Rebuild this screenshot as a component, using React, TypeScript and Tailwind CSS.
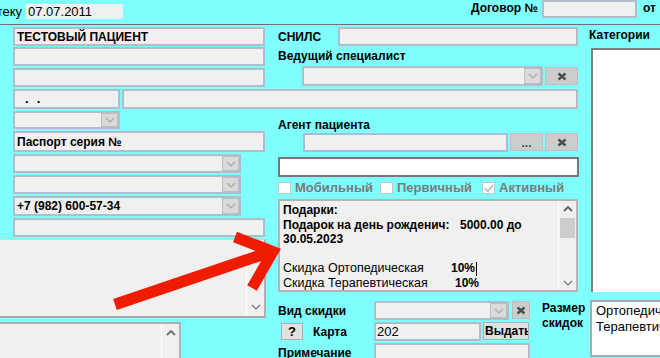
import React from "react";

const FIELD = "bg-[#F0F0F0] border-2 border-[#B3BDCA] shrink-0";

function Chevron({ color = "#A8A8A8", up = false }: { color?: string; up?: boolean }) {
  return (
    <svg width="10" height="6" viewBox="0 0 10 6">
      <polyline
        points={up ? "1,5 5,1 9,5" : "1,1 5,5 9,1"}
        fill="none"
        stroke={color}
        strokeWidth={up ? 1.8 : 1.2}
      />
    </svg>
  );
}

function XIcon() {
  return (
    <svg width="10" height="9" viewBox="0 0 10 9">
      <path d="M1.5 1.5 L8.5 7.5 M8.5 1.5 L1.5 7.5" stroke="#4d4d4d" strokeWidth="2.4" />
    </svg>
  );
}

function Combo({ className = "", children }: { className?: string; children?: React.ReactNode }) {
  return (
    <div className={`${FIELD} flex items-stretch ${className}`}>
      <div className="flex-1 flex items-center pl-[2px] overflow-hidden whitespace-nowrap">{children}</div>
      <div className="w-[17px] bg-[#DADADA] border border-[#BDBDBD] flex items-center justify-center shrink-0">
        <Chevron />
      </div>
    </div>
  );
}

function XBtn({ className = "" }: { className?: string }) {
  return (
    <div className={`bg-[#CCCCCC] border border-[#BDBDBD] flex items-center justify-center shrink-0 ${className}`}>
      <XIcon />
    </div>
  );
}

function CheckBox({ checked = false }: { checked?: boolean }) {
  return (
    <div className="w-[13px] h-[12px] bg-white border border-[#C4C4C4] shrink-0 flex items-center justify-center">
      {checked && (
        <svg width="10" height="9" viewBox="0 0 10 9">
          <polyline points="1,4.5 3.8,7.5 9,1" fill="none" stroke="#B0B0B0" strokeWidth="1.3" />
        </svg>
      )}
    </div>
  );
}

export default function App() {
  return (
    <div className="relative w-[660px] h-[358px] overflow-hidden bg-[#80FFFF] font-['Liberation_Sans',Arial,sans-serif] text-black">
      {/* top bar */}
      <div className="h-[25px] border-b border-[#6E6E6E] flex items-start">
        <div className="w-[22px] h-[24px] flex items-center justify-end overflow-hidden whitespace-nowrap text-[13px]">
          теку
        </div>
        <div className="ml-[4px] mt-[4px] w-[97px] h-[15px] bg-[#F0F0F0] flex items-center pl-[2px] text-[13px] shrink-0">
          07.07.2011
        </div>
        <div className="ml-[348px] h-[16px] w-[64px] shrink-0 flex items-center text-[12px] font-bold whitespace-nowrap">
          Договор №
        </div>
        <div className={`${FIELD} ml-[7px] w-[95px] h-[18px]`} />
        <div className="ml-[6px] h-[16px] flex items-center text-[12px] font-bold">от</div>
      </div>

      {/* main */}
      <div className="flex">
        <div className="w-[589px] shrink-0 flex flex-col">
          {/* block 1 */}
          <div className="flex pt-[2px]">
            <div className="w-[266px] shrink-0 pl-[13px] flex flex-col">
              <div className={`${FIELD} w-[252px] h-[19px] flex items-center pl-[2px] text-[12px] font-bold`}>
                ТЕСТОВЫЙ ПАЦИЕНТ
              </div>
              <div className={`${FIELD} mt-[1px] w-[252px] h-[19px]`} />
              <div className={`${FIELD} mt-[2px] w-[252px] h-[19px]`} />
            </div>
            <div className="ml-[12px] w-[300px] flex flex-col">
              <div className="flex h-[19px] items-center">
                <div className="w-[60px] shrink-0 text-[12px] font-bold">СНИЛС</div>
                <div className={`${FIELD} w-[240px] h-[19px]`} />
              </div>
              <div className="h-[20px] flex items-center text-[12px] font-bold whitespace-nowrap">
                Ведущий специалист
              </div>
              <div className="flex items-start">
                <Combo className="ml-[24px] w-[241px] h-[20px]" />
                <XBtn className="ml-[2px] mt-[1px] w-[33px] h-[18px]" />
              </div>
            </div>
          </div>

          {/* row 4 */}
          <div className="flex mt-[2px] pl-[13px]">
            <div className={`${FIELD} w-[107px] h-[20px] flex items-center pl-[10px] text-[13px] font-bold`}>
              <span>.</span>
              <span className="ml-[8px]">.</span>
            </div>
            <div className={`${FIELD} ml-[2px] w-[456px] h-[20px]`} />
          </div>

          {/* block 2 */}
          <div className="flex">
            <div className="w-[266px] shrink-0 flex flex-col">
              <Combo className="ml-[13px] mt-[2px] w-[107px] h-[18px]" />
              <div className={`${FIELD} ml-[13px] mt-[2px] w-[252px] h-[21px] flex items-center pl-[2px] text-[12px] font-bold`}>
                Паспорт серия №
              </div>
              <Combo className="ml-[13px] mt-[2px] w-[228px] h-[19px]" />
              <Combo className="ml-[13px] mt-[2px] w-[228px] h-[19px]" />
              <Combo className="ml-[13px] mt-[2px] w-[228px] h-[20px] text-[12px] font-bold">
                +7 (982) 600-57-34
              </Combo>
              <div className={`${FIELD} ml-[13px] mt-[2px] w-[252px] h-[19px]`} />
              <div className="mt-[2px] w-[266px] h-[79px] bg-[#F0F0F0] border-t border-[#D4D4D4] border-r-2 border-r-[#B0B0B0] border-b-2 border-b-[#A8A8A8] flex justify-end">
                <div className="w-[18px] border-l border-white flex flex-col items-center justify-end pb-[6px]">
                  <Chevron color="#6E6E6E" />
                </div>
              </div>
              <div className="mt-[4px] w-[181px] h-[40px] bg-[#F0F0F0] border-t-2 border-[#B0B0B0] border-r-2 flex justify-end">
                <div className="w-[18px] border-l border-white flex flex-col items-center pt-[6px]">
                  <Chevron color="#6E6E6E" up />
                </div>
              </div>
            </div>

            <div className="ml-[12px] w-[301px] flex flex-col">
              <div className="mt-[8px] h-[16px] flex items-center text-[12px] font-bold whitespace-nowrap">
                Агент пациента
              </div>
              <div className="flex items-start h-[19px]">
                <div className="ml-[25px] w-[205px] h-[19px] bg-[#F0F0F0] border-2 border-[#A9BCDD] shrink-0" />
                <div className="ml-[2px] w-[33px] h-[18px] bg-[#CCCCCC] border border-[#BDBDBD] flex items-end justify-center pb-[1px] text-[12px] font-bold text-[#505050] leading-[12px] shrink-0">
                  ...
                </div>
                <XBtn className="ml-[2px] w-[33px] h-[18px]" />
              </div>
              <div className="mt-[5px] w-[301px] h-[20px] bg-white border-2 border-[#767676]" />
              <div className="mt-[4px] h-[14px] flex items-center text-[13px] font-bold text-[#7A7A7A] whitespace-nowrap">
                <CheckBox />
                <span className="ml-[4px] w-[85px] shrink-0">Мобильный</span>
                <CheckBox />
                <span className="ml-[4px] w-[85px] shrink-0">Первичный</span>
                <CheckBox checked />
                <span className="ml-[4px]">Активный</span>
              </div>
              <div className="mt-[4px] w-[300px] h-[93px] bg-[#F0F0F0] border-2 border-[#B4B4B4] flex">
                <div className="flex-1 pl-[3px] pt-[2px] text-[12px] leading-[14.6px] whitespace-nowrap overflow-hidden">
                  <div className="font-bold">Подарки:</div>
                  <div className="flex font-bold">
                    <span className="w-[177px] shrink-0">Подарок на день рожденич:</span>
                    <span>5000.00 до</span>
                  </div>
                  <div className="font-bold">30.05.2023</div>
                  <div>&nbsp;</div>
                  <div className="flex items-center h-[14.6px]">
                    <span className="w-[168px] shrink-0 text-[12.5px]">Скидка Ортопедическая</span>
                    <span className="font-bold">10%</span>
                    <span className="ml-[1px] w-[1px] h-[14px] bg-black" />
                  </div>
                  <div className="flex h-[14.6px] items-center">
                    <span className="w-[172px] shrink-0 text-[12.5px]">Скидка Терапевтическая</span>
                    <span className="font-bold">10%</span>
                  </div>
                </div>
                <div className="w-[18px] border-l border-white flex flex-col items-center pt-[5px] pb-[4px]">
                  <Chevron color="#5E5E5E" up />
                  <div className="mt-[6px] w-[15px] h-[20px] bg-[#CDCDCD]" />
                  <div className="flex-1" />
                  <Chevron color="#6E6E6E" />
                </div>
              </div>

              <div className="mt-[9px] flex">
                <div className="w-[252px] shrink-0 flex flex-col">
                  <div className="flex h-[19px]">
                    <div className="w-[96px] shrink-0 flex items-center text-[12px] font-bold">Вид скидки</div>
                    <Combo className="w-[135px] h-[19px]" />
                    <XBtn className="ml-[3px] w-[18px] h-[18px]" />
                  </div>
                  <div className="mt-[2px] flex h-[19px]">
                    <div className="ml-[3px] mt-[1px] w-[22px] h-[17px] bg-[#E1E1E1] border border-[#ADADAD] flex items-center justify-center text-[13px] font-bold shrink-0">
                      ?
                    </div>
                    <div className="ml-[10px] w-[61px] shrink-0 flex items-center text-[12px] font-bold">Карта</div>
                    <div className={`${FIELD} w-[107px] h-[19px] flex items-center pl-[1px] text-[13px]`}>202</div>
                    <div className="ml-[2px] w-[46px] h-[18px] bg-[#E1E1E1] border border-[#ADADAD] flex items-center pl-[1px] text-[12px] font-bold overflow-hidden whitespace-nowrap shrink-0">
                      Выдать
                    </div>
                  </div>
                  <div className="mt-[2px] flex h-[20px]">
                    <div className="w-[96px] shrink-0 flex items-center text-[12px] font-bold">Примечание</div>
                    <div className={`${FIELD} w-[156px] h-[20px]`} />
                  </div>
                </div>
                <div className="ml-[12px] text-[12px] font-bold leading-[15px]">
                  Размер
                  <br />
                  скидок
                </div>
              </div>
            </div>
          </div>
        </div>

        {/* right column */}
        <div className="flex flex-col">
          <div className="h-[20px] flex items-center text-[12px] font-bold whitespace-nowrap">Категории</div>
          <div className="ml-[2px] mt-[3px] h-[244px] w-[80px] bg-white border-l-2 border-t-2 border-[#7F7F7F]" />
          <div className="ml-[1px] mt-[8px] h-[57px] w-[80px] bg-white border-2 border-[#A9A9A9] pl-[4px] pt-[1px] text-[13px] leading-[16px] whitespace-nowrap overflow-hidden">
            <div>Ортопедическая</div>
            <div>Терапевтическая</div>
          </div>
        </div>
      </div>

      {/* red arrow overlay */}
      <svg className="absolute left-0 top-0 pointer-events-none" width="660" height="358" viewBox="0 0 660 358">
        <line x1="115" y1="304.5" x2="270" y2="252" stroke="#F01C00" strokeWidth="11.5" />
        <polyline
          points="235,237 273,251.5 252,288"
          fill="none"
          stroke="#F01C00"
          strokeWidth="11"
          strokeLinejoin="miter"
        />
      </svg>
    </div>
  );
}
